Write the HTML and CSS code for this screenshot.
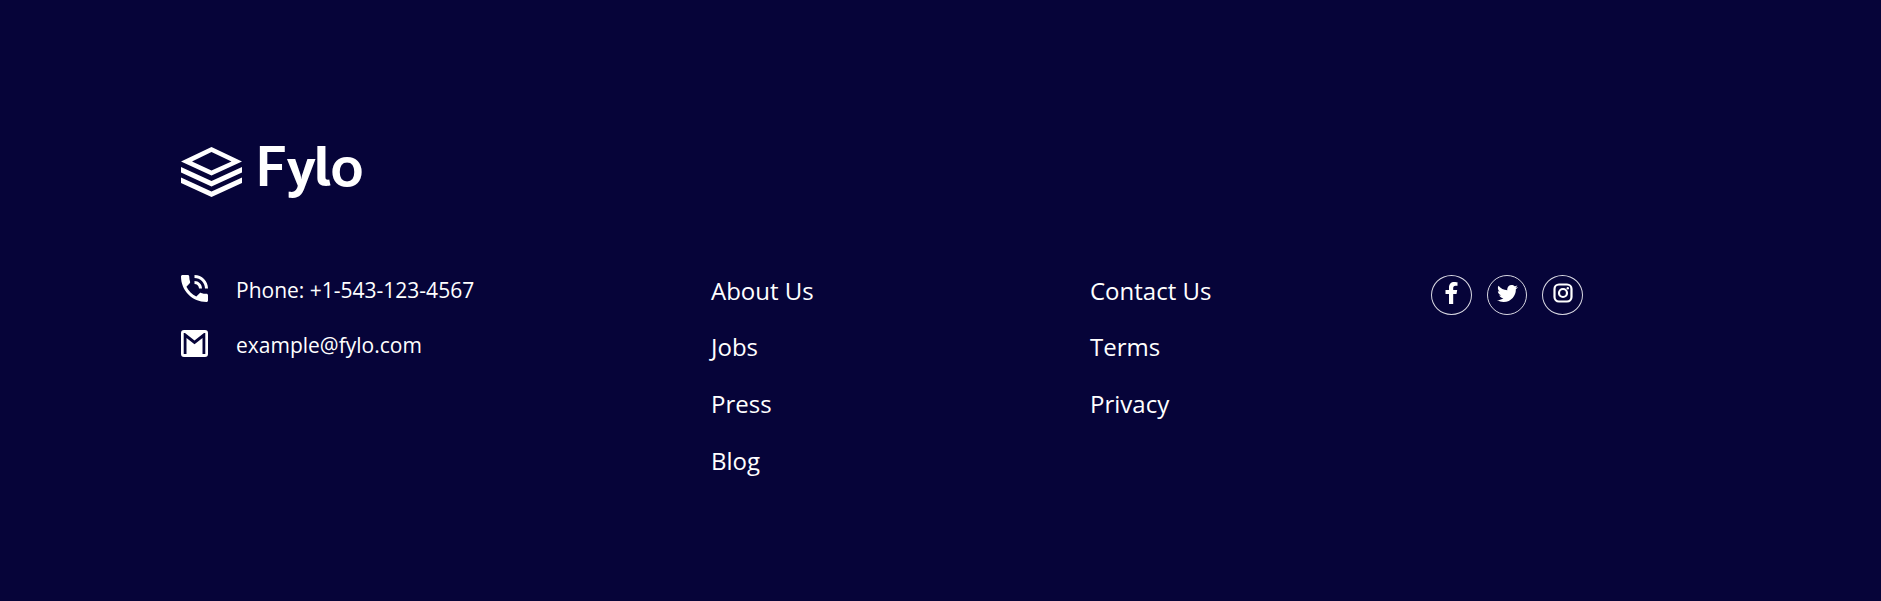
FILE: index.html
```html
<!DOCTYPE html>
<html lang="en">
<head>
<meta charset="utf-8">
<title>Fylo</title>
<link rel="stylesheet" href="styles.css">
</head>
<body>
<footer class="footer">
  <svg class="logo" width="200" height="80" viewBox="0 -12 200 80" role="img" aria-label="Fylo">
    <path fill-rule="evenodd" d="M30.500 5L61 19.500L30.500 33.500L0 19.500ZM30.500 10L11 19.500L30.500 28.500L50.500 19.500Z"/>
    <path d="M0 25L30.500 39L61 25V30.500L30.500 44.500L0 30.500Z"/>
    <path d="M0 35.500L30.500 49.500L61 35.500V41L30.500 55L0 41Z"/>
    <text class="wordmark" y="44"><tspan x="74.500">F</tspan><tspan class="wye" x="106">y</tspan><tspan class="ell" x="133">l</tspan><tspan class="oh" x="149.400" y="44.600">o</tspan></text>
  </svg>
  <div class="columns">
    <address class="contact">
      <div class="contact-row">
        <svg class="contact-icon" viewBox="3 3 18 18"><path d="M20 15.500c-1.250 0-2.450-.2-3.570-.57-.1-.03-.21-.05-.31-.05-.26 0-.51.1-.71.29l-2.200 2.200c-2.830-1.440-5.150-3.750-6.590-6.580l2.200-2.210c.28-.27.36-.66.25-1.010C8.700 6.450 8.500 5.250 8.500 4c0-.55-.45-1-1-1H4c-.55 0-1 .45-1 1 0 9.390 7.610 17 17 17 .55 0 1-.45 1-1v-3.500c0-.55-.45-1-1-1zM19 12h2c0-4.970-4.030-9-9-9v2c3.870 0 7 3.130 7 7zm-4 0h2c0-2.760-2.240-5-5-5v2c1.660 0 3 1.340 3 3z"/></svg>
        <span>Phone: +1-543-123-4567</span>
      </div>
      <div class="contact-row">
        <svg class="contact-icon" viewBox="0 0 27 27"><path fill-rule="evenodd" d="M3 0H24Q27 0 27 3V24Q27 27 24 27H3Q0 27 0 24V3Q0 0 3 0ZM2.700 3V24H5.500V8L13.500 14.300L21.500 8V24H24.300V3H23L13.500 10.500L4 3Z"/></svg>
        <span>example@fylo.com</span>
      </div>
    </address>
    <nav class="links about"><a>About Us</a><a>Jobs</a><a>Press</a><a>Blog</a></nav>
    <nav class="links help"><a>Contact Us</a><a>Terms</a><a>Privacy</a></nav>
    <div class="social">
      <a class="circle" aria-label="Facebook"><svg width="13" height="22" viewBox="0 0 13 22"><path d="M4 22V12H.5V8H4V5.500C4 2 6 0 9.200 0C10.700 0 12.500.3 12.500.3V3.700H10.600C8.800 3.700 8.200 4.700 8.200 6V8H12.200L11.500 12H8.200V22Z"/></svg></a>
      <a class="circle narrow" aria-label="Twitter"><svg width="21" height="21" viewBox="0 0 512 512"><path d="M459.370 151.716c.325 4.548.325 9.097.325 13.645 0 138.720-105.583 298.558-298.558 298.558-59.452 0-114.680-17.219-161.137-47.106 8.447.974 16.568 1.299 25.340 1.299 49.055 0 94.213-16.568 130.274-44.832-46.132-.975-84.792-31.188-98.112-72.772 6.498.974 12.995 1.624 19.818 1.624 9.421 0 18.843-1.300 27.614-3.573-48.081-9.747-84.143-51.980-84.143-102.985v-1.299c13.969 7.797 30.214 12.670 47.431 13.319-28.264-18.843-46.781-51.005-46.781-87.391 0-19.492 5.197-37.360 14.294-52.954 51.655 63.675 129.300 105.258 216.365 109.807-1.624-7.797-2.599-15.918-2.599-24.040 0-57.828 46.782-104.934 104.934-104.934 30.213 0 57.502 12.670 76.670 33.137 23.715-4.548 46.456-13.320 66.599-25.340-7.798 24.366-24.366 44.833-46.132 57.827 21.117-2.273 41.584-8.122 60.426-16.243-14.292 20.791-32.161 39.308-52.628 54.253z"/></svg></a>
      <a class="circle" aria-label="Instagram"><svg class="instagram" width="20" height="20" viewBox="0 0 20 20"><rect x="1.500" y="1.500" width="17" height="17" rx="4.500"/><circle cx="10" cy="10" r="4"/><circle class="lens" cx="14.800" cy="5.200" r="1.200"/></svg></a>
    </div>
  </div>
</footer>
</body>
</html>
```
FILE: styles.css
```css
* { box-sizing: border-box; }
body {
  margin: 0;
  background: #060439;
  font-family: "Open Sans", sans-serif;
  color: #fff;
}
.footer {
  min-height: 601px;
  padding: 130px 180px 0 181px;
}
svg { fill: #fff; }
.logo { display: block; overflow: visible; }
.wordmark {
  font-family: Lato, sans-serif;
  font-size: 54.500px;
  font-weight: 700;
}
.wye {
  font-family: "Open Sans", sans-serif;
  font-size: 50px;
  font-weight: 700;
}
.oh { font-size: 57.500px; }
.ell {
  font-family: Inter, sans-serif;
  font-feature-settings: "cv05";
}
.columns {
  display: grid;
  grid-template-columns: 530px 379px 341px auto;
  align-items: start;
  padding-top: 65px;
}
.contact {
  display: grid;
  gap: 28px;
  font-style: normal;
  font-size: 21px;
  line-height: 27px;
}
.contact-row { display: flex; gap: 28px; }
.contact-row span { padding-top: 2px; height: 27px; }
.contact-icon { width: 27px; height: 27px; }
.links {
  display: grid;
  margin-top: -0.300px;
  font-size: 24px;
  line-height: 32px;
  gap: 24.700px;
}
.social { display: flex; gap: 15px; }
.circle {
  width: 41px;
  height: 40px;
  border: 1px solid #d8d8e2;
  border-radius: 50%;
  display: flex;
  align-items: center;
  justify-content: center;
  padding-bottom: 4px;
}
.narrow { width: 40px; padding-left: 1px; }
.instagram {
  fill: none;
  stroke: #fff;
  stroke-width: 2.200;
}
.lens { fill: #fff; stroke: none; }
```
